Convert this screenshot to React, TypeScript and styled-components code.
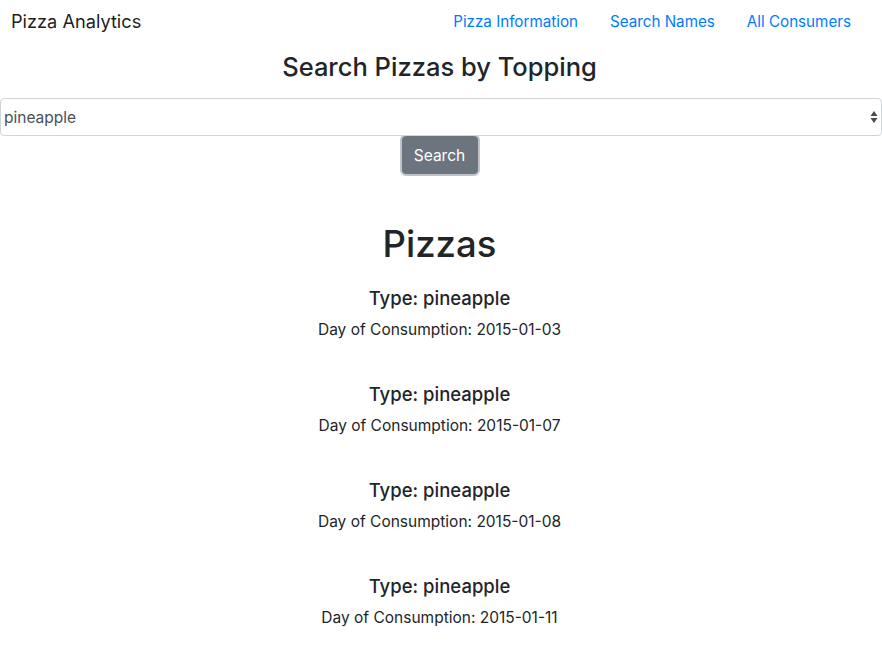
import React from "react";
import styled, { createGlobalStyle } from "styled-components";

const Global = createGlobalStyle`
  html, body { margin: 0; padding: 0; background: #fff; }
  body {
    font-family: Inter, "Liberation Sans", Arial, sans-serif;
    color: #212529;
    font-size: 16px;
    line-height: 1.5;
  }
  * { box-sizing: border-box; }
`;

const Nav = styled.nav`
  display: flex;
  align-items: center;
  justify-content: space-between;
  height: 44px;
  padding: 0 15px 0 11px;
`;

const Brand = styled.a`
  font-size: 18.2px;
  color: rgba(0, 0, 0, 0.9);
  text-decoration: none;
  line-height: 1.2;
`;

const Links = styled.div`
  display: flex;
`;

const NavLink = styled.a`
  color: #007bff;
  text-decoration: none;
  padding: 0 16px;
  font-size: 15.2px;
`;

const Title = styled.h3`
  margin: 7px 0 16px;
  padding-right: 3px;
  font-size: 25.5px;
  font-weight: 500;
  line-height: 31px;
  text-align: center;
`;

const SelectWrap = styled.div`
  position: relative;
`;

const Select = styled.select`
  display: block;
  width: 100%;
  height: 38px;
  padding: 0 24px 0 3px;
  font-family: inherit;
  font-size: 15.5px;
  color: #495057;
  background: #fff;
  border: 1px solid #ced4da;
  border-radius: 4px;
  appearance: none;
  -webkit-appearance: none;
  outline: none;
`;

const Arrows = styled.svg`
  position: absolute;
  right: 3px;
  top: 12px;
  pointer-events: none;
`;

const ButtonRow = styled.div`
  display: flex;
  justify-content: center;
  padding-right: 3px;
`;

const Button = styled.button`
  width: 76px;
  height: 38px;
  font-family: inherit;
  font-size: 15.5px;
  color: #fff;
  background: #6c757d;
  border: 1px solid #6c757d;
  border-radius: 4px;
  box-shadow: 0 0 0 2px rgba(130, 138, 145, 0.5);
`;

const Heading = styled.h1`
  margin: 46px 0 18px;
  padding-right: 3px;
  font-size: 36.5px;
  font-weight: 500;
  line-height: 48px;
  text-align: center;
`;

const List = styled.div`
  display: flex;
  flex-direction: column;
  align-items: center;
  gap: 40px;
  padding-right: 3px;
`;

const Item = styled.div`
  display: flex;
  flex-direction: column;
  align-items: center;
`;

const ItemType = styled.h5`
  margin: 0 0 8px;
  font-size: 18.5px;
  font-weight: 500;
  line-height: 24px;
`;

const ItemDay = styled.p`
  margin: 0;
  font-size: 15.5px;
  line-height: 24px;
`;

const pizzas = ["2015-01-03", "2015-01-07", "2015-01-08", "2015-01-11"];

export default function App() {
  return (
    <>
      <Global />
      <Nav>
        <Brand href="#">Pizza Analytics</Brand>
        <Links>
          <NavLink href="#">Pizza Information</NavLink>
          <NavLink href="#">Search Names</NavLink>
          <NavLink href="#">All Consumers</NavLink>
        </Links>
      </Nav>
      <Title>Search Pizzas by Topping</Title>
      <SelectWrap>
        <Select defaultValue="pineapple">
          <option value="pineapple">pineapple</option>
        </Select>
        <Arrows width="10" height="14" viewBox="0 0 10 14">
          <path d="M5 1 L8.5 6 L1.5 6 Z" fill="#4a4a4a" />
          <path d="M1.5 8 L8.5 8 L5 13 Z" fill="#4a4a4a" />
        </Arrows>
      </SelectWrap>
      <ButtonRow>
        <Button>Search</Button>
      </ButtonRow>
      <Heading>Pizzas</Heading>
      <List>
        {pizzas.map((d) => (
          <Item key={d}>
            <ItemType>Type: pineapple</ItemType>
            <ItemDay>Day of Consumption: {d}</ItemDay>
          </Item>
        ))}
      </List>
    </>
  );
}
